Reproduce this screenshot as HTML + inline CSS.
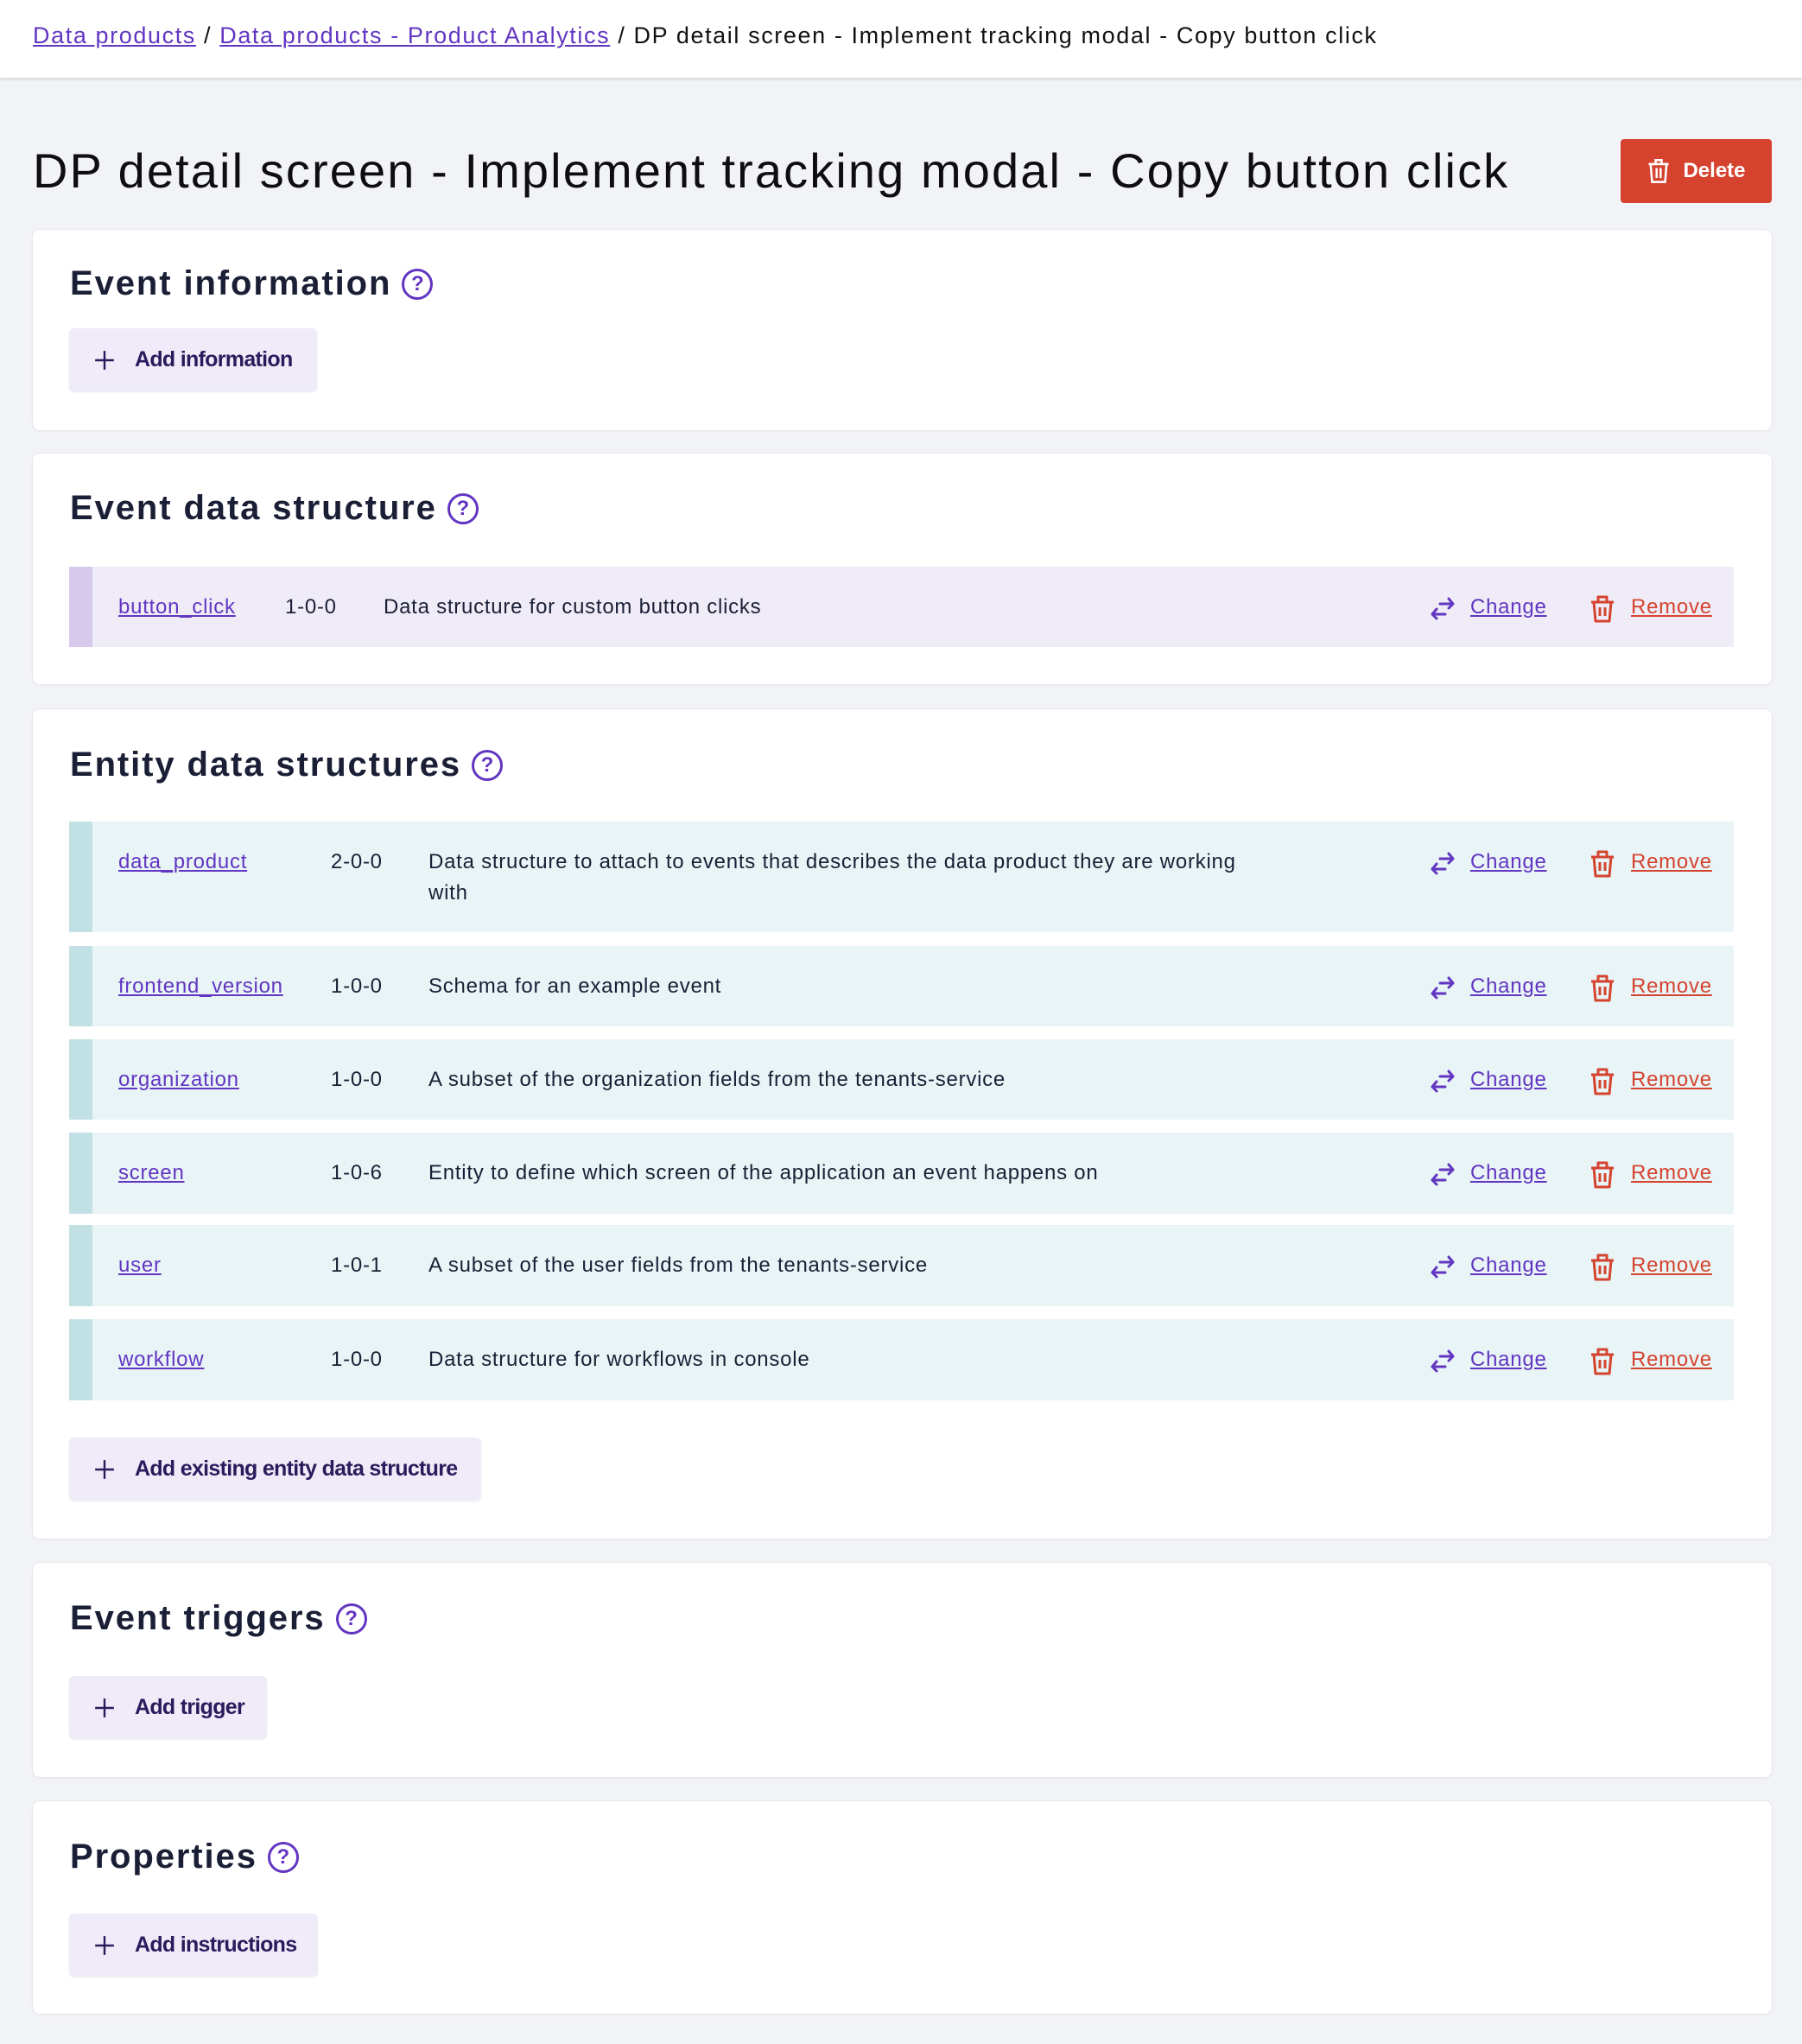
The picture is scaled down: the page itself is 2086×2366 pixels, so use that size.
<!DOCTYPE html>
<html><head><meta charset="utf-8"><style>
*{box-sizing:border-box;margin:0;padding:0}
body{width:2086px;height:2366px;background:#f2f3f7;font-family:"Liberation Sans",sans-serif;position:relative;overflow:hidden;color:#1a1f36}
.hdr{position:absolute;left:0;top:0;width:2086px;height:90px;background:#fff;box-shadow:0 2px 3px rgba(0,0,0,.12)}
.bc{position:absolute;left:38px;top:26px;font-size:27px;color:#111;letter-spacing:1.6px;white-space:nowrap}
.bc a{color:#6236c2;text-decoration:underline}
h1{position:absolute;left:38px;top:165px;font-size:56px;font-weight:400;color:#0d0d12;white-space:nowrap;letter-spacing:2.1px}
.del{position:absolute;left:1876px;top:161px;width:175px;height:74px;background:#d5432f;border-radius:4px;color:#fff;font-size:24px;font-weight:700;display:flex;align-items:center;justify-content:center;gap:14px}
.card{position:absolute;left:38px;width:2013px;background:#fff;border-radius:8px;box-shadow:0 0 0 1px #e6e7ec,0 1px 3px rgba(0,0,0,.06)}
.h2{position:absolute;left:43px;font-size:40px;font-weight:700;color:#1a1f36;display:flex;align-items:center;gap:12px;white-space:nowrap;letter-spacing:1.9px}
.q{width:36px;height:36px;border:3px solid #6236c2;border-radius:50%;color:#6236c2;font-size:24px;font-weight:700;letter-spacing:0;display:flex;align-items:center;justify-content:center}
.btn{position:absolute;left:42px;height:73px;background:#efebf8;border-radius:6px;color:#2b1a5c;font-size:25px;font-weight:700;letter-spacing:-0.7px;display:flex;align-items:center;padding-left:28px;gap:22px;box-shadow:0 1px 2px rgba(0,0,0,.08);white-space:nowrap}
.row{position:absolute;left:42px;width:1927px;font-size:24px;color:#1a1f36;letter-spacing:0.75px}
.row .bar{position:absolute;left:0;top:0;bottom:0;width:27px}
.row span{position:absolute;top:29px;line-height:36px;white-space:nowrap}
.row a{color:#6236c2;text-decoration:underline}
.row a.r{color:#d5432f}
.ev{background:#efecf7}.ev .bar{background:#d6c9eb}
.en{background:#e8f4f6}.en .bar{background:#c2e1e5}
.ic{position:absolute;top:33px}
</style></head><body>
<div class="hdr"><div class="bc"><a>Data products</a> / <a>Data products - Product Analytics</a> / DP detail screen - Implement tracking modal - Copy button click</div></div>
<h1>DP detail screen - Implement tracking modal - Copy button click</h1>
<div class="del"><svg width="28" height="30" viewBox="0 0 24 26" fill="none" stroke="#fff" stroke-width="2.2"><path d="M2 6h20M9 6V2h6v4M4 6l1.5 18h13L20 6M10 10v10M14 10v10"/></svg>Delete</div>

<div class="card" style="top:266px;height:232px">
<div class="h2" style="top:40px">Event information <div class="q">?</div></div>
<div class="btn" style="top:114px;width:287px"><svg width="26" height="26" viewBox="0 0 24 24" stroke="#2b1a5c" stroke-width="2.2"><path d="M12 2v20M2 12h20"/></svg>Add information</div>
</div>

<div class="card" style="top:525px;height:267px">
<div class="h2" style="top:41px">Event data structure <div class="q">?</div></div>
<div class="row ev" style="top:131px;height:93px"><div class="bar"></div>
<span style="left:57px"><a>button_click</a></span><span style="left:250px">1-0-0</span><span style="left:364px">Data structure for custom button clicks</span>
ACT
</div>
</div>

<div class="card" style="top:821px;height:960px">
<div class="h2" style="top:42px">Entity data structures <div class="q">?</div></div>
<div class="row en" style="top:130px;height:128px"><div class="bar"></div><span style="left:57px"><a>data_product</a></span><span style="left:303px">2-0-0</span><span style="left:416px;white-space:normal;width:970px">Data structure to attach to events that describes the data product they are working with</span>ACT</div>
<div class="row en" style="top:274px;height:93px"><div class="bar"></div><span style="left:57px"><a>frontend_version</a></span><span style="left:303px">1-0-0</span><span style="left:416px">Schema for an example event</span>ACT</div>
<div class="row en" style="top:382px;height:93px"><div class="bar"></div><span style="left:57px"><a>organization</a></span><span style="left:303px">1-0-0</span><span style="left:416px">A subset of the organization fields from the tenants-service</span>ACT</div>
<div class="row en" style="top:490px;height:94px"><div class="bar"></div><span style="left:57px"><a>screen</a></span><span style="left:303px">1-0-6</span><span style="left:416px">Entity to define which screen of the application an event happens on</span>ACT</div>
<div class="row en" style="top:597px;height:94px"><div class="bar"></div><span style="left:57px"><a>user</a></span><span style="left:303px">1-0-1</span><span style="left:416px">A subset of the user fields from the tenants-service</span>ACT</div>
<div class="row en" style="top:706px;height:94px"><div class="bar"></div><span style="left:57px"><a>workflow</a></span><span style="left:303px">1-0-0</span><span style="left:416px">Data structure for workflows in console</span>ACT</div>
<div class="btn" style="top:843px;width:477px"><svg width="26" height="26" viewBox="0 0 24 24" stroke="#2b1a5c" stroke-width="2.2"><path d="M12 2v20M2 12h20"/></svg>Add existing entity data structure</div>
</div>

<div class="card" style="top:1809px;height:248px">
<div class="h2" style="top:42px">Event triggers <div class="q">?</div></div>
<div class="btn" style="top:131px;width:229px"><svg width="26" height="26" viewBox="0 0 24 24" stroke="#2b1a5c" stroke-width="2.2"><path d="M12 2v20M2 12h20"/></svg>Add trigger</div>
</div>

<div class="card" style="top:2085px;height:246px">
<div class="h2" style="top:42px">Properties <div class="q">?</div></div>
<div class="btn" style="top:130px;width:288px"><svg width="26" height="26" viewBox="0 0 24 24" stroke="#2b1a5c" stroke-width="2.2"><path d="M12 2v20M2 12h20"/></svg>Add instructions</div>
</div>
<script>
var act='<svg class="ic" style="left:1575px" width="30" height="32" viewBox="0 0 30 32" fill="none" stroke="#6236c2" stroke-width="3" stroke-linecap="round" stroke-linejoin="round"><path d="M12 10h15M22 4l5 6-5 5M18 22H3M8 16l-5 6 5 5"/></svg><span style="left:1622px"><a>Change</a></span><svg class="ic" style="left:1761px" width="28" height="32" viewBox="0 0 28 32" fill="none" stroke="#d5432f" stroke-width="3" stroke-linejoin="round"><path d="M1 8h26M9 8V2h10v6M4 8l2 22h16l2-22M11 14v10M17 14v10"/></svg><span style="left:1808px"><a class="r">Remove</a></span>';
document.querySelectorAll('.row').forEach(function(r){r.innerHTML=r.innerHTML.replace('ACT',act);});
</script>
</body></html>
